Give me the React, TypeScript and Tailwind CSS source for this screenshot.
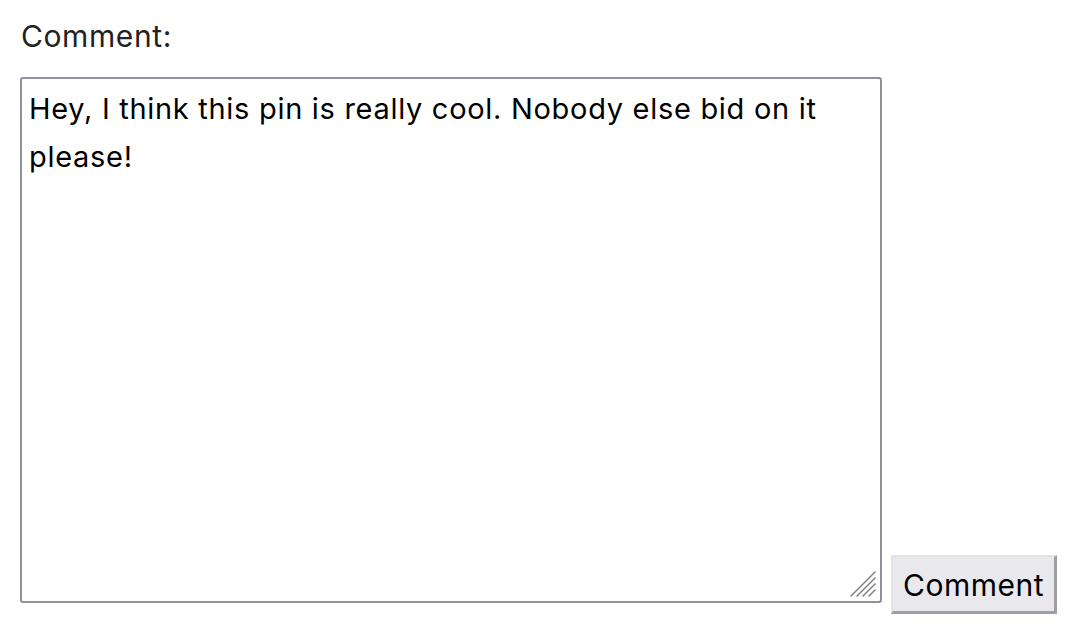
import React from "react";

const grip = (
  <svg width="28" height="28" viewBox="0 0 28 28" className="pointer-events-none absolute bottom-[5px] right-[5px]">
    <g stroke="#858585" strokeWidth="1.6" strokeLinecap="round">
      <line x1="26" y1="2" x2="2" y2="26" />
      <line x1="26" y1="8" x2="8" y2="26" />
      <line x1="26" y1="14" x2="14" y2="26" />
      <line x1="26" y1="20" x2="20" y2="26" />
    </g>
  </svg>
);

export default function App() {
  return (
    <div className="min-h-[634px] w-[1090px] bg-white px-[20px] pt-[14px] font-['Inter',sans-serif]">
      <label htmlFor="comment" className="block pl-[1px] text-[30px] leading-[44px] tracking-[0.6px] text-[#222]">
        Comment:
      </label>
      <div className="mt-[19px] flex items-end gap-[9px]">
        <div className="relative">
          <textarea
            id="comment"
            defaultValue="Hey, I think this pin is really cool. Nobody else bid on it please!"
            className="block h-[526px] w-[862px] resize-none rounded-[3px] border-2 border-[#8f8f9d] px-[7px] py-[6px] text-[29px] leading-[48px] tracking-[0.7px] text-black outline-none"
          />
          {grip}
        </div>
        <button className="-mb-[11px] h-[59px] w-[166px] border-b-[3px] border-l-2 border-r-[3px] border-t-2 border-b-[#a0a0a0] border-l-[#e2e2e2] border-r-[#a0a0a0] border-t-[#e2e2e2] bg-[#e9e9ed] pt-[2px] text-[30px] leading-none tracking-[0.5px] text-black">
          Comment
        </button>
      </div>
    </div>
  );
}
